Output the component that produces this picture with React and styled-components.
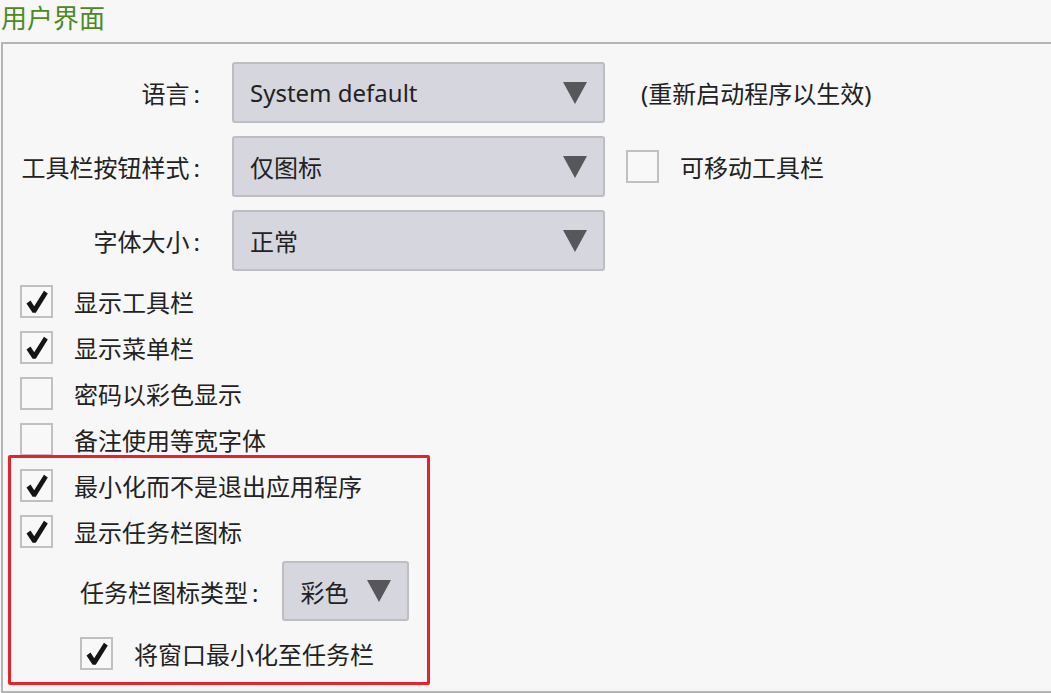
import React from "react";
import styled, { createGlobalStyle } from "styled-components";

const Global = createGlobalStyle`
  html, body {
    margin: 0;
    padding: 0;
    background: #f7f7f7;
    overflow: hidden;
  }
  body {
    font-family: "Noto Sans", "Noto Sans CJK SC", sans-serif;
    font-size: 24px;
    color: #222;
  }
`;

const CheckIcon = () => (
  <svg width="22" height="24" viewBox="0 0 22 24">
    <path d="M0.5 13.5 L4.5 10.5 L8.2 16.2 L18 0.8 L21.8 3.4 L9.8 22.8 L6.6 22.8 Z" fill="#141414" />
  </svg>
);

const Checkbox = ({ checked }) => (
  <Box>{checked && <CheckIcon />}</Box>
);

const Combo = ({ value, width }) => (
  <ComboBox $width={width}>
    <span>{value}</span>
    <Arrow />
  </ComboBox>
);

const CheckRow = ({ checked, label, indent }) => (
  <Row $indent={indent}>
    <Checkbox checked={checked} />
    <span>{label}</span>
  </Row>
);

const FieldLabel = ({ text }) => (
  <>
    {text}
    <Colon>:</Colon>
  </>
);

export default function App() {
  return (
    <Page>
      <Global />
      <Title>用户界面</Title>
      <GroupBox>
        <FormGrid>
          <Label><FieldLabel text="语言" /></Label>
          <Combo value="System default" />
          <Note>(重新启动程序以生效)</Note>

          <Label><FieldLabel text="工具栏按钮样式" /></Label>
          <Combo value="仅图标" />
          <SideCheck>
            <Checkbox />
            <span>可移动工具栏</span>
          </SideCheck>

          <Label><FieldLabel text="字体大小" /></Label>
          <Combo value="正常" />
          <div />
        </FormGrid>

        <CheckList>
          <CheckRow checked label="显示工具栏" />
          <CheckRow checked label="显示菜单栏" />
          <CheckRow label="密码以彩色显示" />
          <CheckRow label="备注使用等宽字体" />
          <Highlight>
            <CheckRow checked label="最小化而不是退出应用程序" />
            <CheckRow checked label="显示任务栏图标" />
            <SubRow>
              <span><FieldLabel text="任务栏图标类型" /></span>
              <Combo value="彩色" width={127} />
            </SubRow>
            <LastRow>
              <CheckRow checked indent={60} label="将窗口最小化至任务栏" />
            </LastRow>
          </Highlight>
        </CheckList>
      </GroupBox>
    </Page>
  );
}

const Page = styled.div`
  width: 1051px;
  height: 693px;
  overflow: hidden;
`;

const Title = styled.div`
  color: #4b8a1f;
  font-size: 26px;
  line-height: 36px;
  padding: 0 0 6px 1px;
`;

const GroupBox = styled.section`
  width: 1080px;
  margin-left: 1px;
  border: 2px solid #b5b5b5;
  padding: 18px 0 6px 0;
`;

const FormGrid = styled.div`
  display: grid;
  grid-template-columns: 229px 373px auto;
  row-gap: 13px;
  align-items: center;
`;

const Label = styled.div`
  text-align: right;
  padding-right: 32px;
  white-space: nowrap;
`;

const Colon = styled.span`
  margin-left: 4px;
`;

const ComboBox = styled.div`
  box-sizing: border-box;
  width: ${(p) => (p.$width ? `${p.$width}px` : "auto")};
  height: 61px;
  display: flex;
  align-items: center;
  justify-content: space-between;
  padding: 0 16px 0 16px;
  background: #d6d6de;
  border: 2px solid #bdbdc2;
  border-radius: 3px;
  white-space: nowrap;
`;

const Arrow = styled.i`
  width: 0;
  height: 0;
  border-left: 12px solid transparent;
  border-right: 12px solid transparent;
  border-top: 22px solid #56565b;
`;

const Note = styled.div`
  margin-left: 36px;
  white-space: nowrap;
`;

const SideCheck = styled.div`
  display: flex;
  align-items: center;
  gap: 21px;
  margin-left: 21px;
  white-space: nowrap;
`;

const Box = styled.div`
  box-sizing: border-box;
  width: 33px;
  height: 33px;
  flex: none;
  border: 2px solid #c0c0c0;
  background: #f8f8f8;
  display: flex;
  align-items: center;
  justify-content: center;
`;

const CheckList = styled.div`
  display: flex;
  flex-direction: column;
  gap: 13px;
  margin-top: 14px;
  padding-left: 17px;
`;

const Row = styled.div`
  display: flex;
  align-items: center;
  gap: 21px;
  height: 33px;
  padding-left: ${(p) => p.$indent || 0}px;
  white-space: nowrap;
`;

const Highlight = styled.div`
  box-sizing: border-box;
  width: 422px;
  margin: -14px 0 0 -12px;
  padding: 11px 0 12px 9px;
  border: 3px solid #e8222b;
  border-radius: 2px;
  display: flex;
  flex-direction: column;
  gap: 13px;
`;

const SubRow = styled.div`
  display: flex;
  align-items: center;
  gap: 24px;
  padding-left: 60px;
  white-space: nowrap;

  & > div {
    height: 60px;
  }
`;

const LastRow = styled.div`
  margin-top: 3px;
`;
